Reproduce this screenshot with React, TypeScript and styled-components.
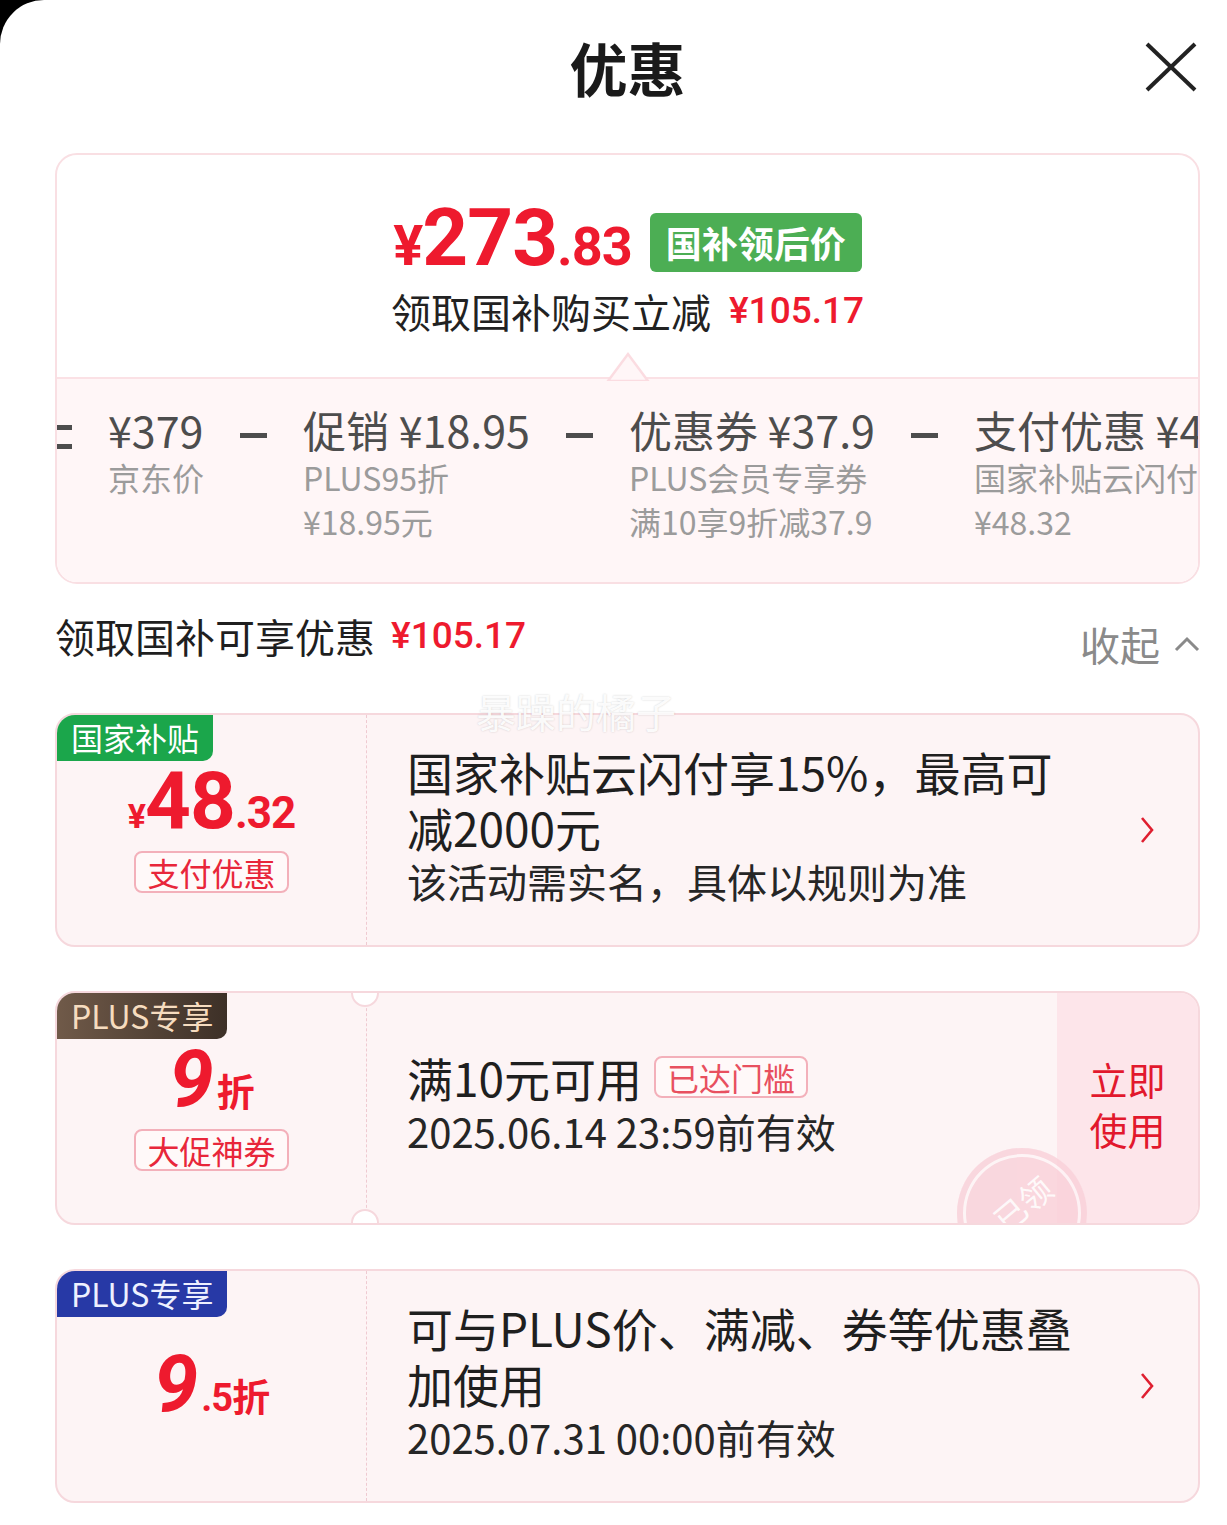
import React from "react";
import styled, { createGlobalStyle, css } from "styled-components";

const RED = "#ee1a2e";
const CJK = `"Noto Sans CJK SC", "Noto Sans", sans-serif`;
const NUM = `Roboto, "Noto Sans CJK SC", sans-serif`;

const GlobalStyle = createGlobalStyle`
  html, body { margin: 0; padding: 0; background: #000; }
  body { font-family: ${CJK}; }
  * { box-sizing: border-box; }
`;

const Sheet = styled.div`
  width: 1227px;
  min-height: 1525px;
  background: #fff;
  border-top-left-radius: 44px;
  padding: 0 27px 0 55px;
  overflow: hidden;
`;

const Header = styled.header`
  height: 140px;
  display: grid;
  grid-template-columns: 1fr auto 1fr;
  align-items: center;
`;

const Title = styled.h1`
  grid-column: 2;
  margin: -6px 0 0;
  font-size: 58px;
  font-weight: 700;
  line-height: 1;
  color: #1a1a1a;
`;

const CloseButton = styled.button`
  grid-column: 3;
  justify-self: end;
  margin: -6px 3px 0 0;
  padding: 0;
  border: 0;
  background: transparent;
  display: flex;
`;

/* ---------- summary card ---------- */

const SummaryCard = styled.section`
  margin-top: 13px;
  border: 2px solid #f9dfe3;
  border-radius: 22px;
  overflow: hidden;
`;

const PriceBlock = styled.div`
  padding: 47px 0 42px;
  display: flex;
  flex-direction: column;
  align-items: center;
  gap: 4px;
`;

const PriceRow = styled.div`
  display: flex;
  align-items: center;
  gap: 18px;
`;

const BigPrice = styled.div`
  display: flex;
  align-items: baseline;
  color: ${RED};
  font-family: ${NUM};
  font-weight: 700;
  line-height: 72px;
  letter-spacing: -1px;
`;

const PricePart = styled.span<{ $size: number }>`
  font-size: ${(p) => p.$size}px;
`;

const GreenTag = styled.span`
  height: 59px;
  line-height: 59px;
  padding: 0 16px;
  border-radius: 6px;
  background: #4cae54;
  color: #fff;
  font-size: 36px;
  font-weight: 700;
`;

const SubLine = styled.div`
  display: flex;
  align-items: center;
  gap: 18px;
  font-size: 40px;
  line-height: 48px;
  color: #222;
`;

const RedAmount = styled.span<{ $size?: number }>`
  color: ${RED};
  font-family: ${NUM};
  font-weight: 500;
  font-size: ${(p) => p.$size ?? 37}px;
`;

const Strip = styled.div`
  position: relative;
  background: #fff6f7;
  border-top: 2px solid #fbe1e5;
  padding: 24px 0 39px;
`;

const Notch = styled.svg`
  position: absolute;
  top: -28px;
  left: 50%;
  transform: translateX(-50%);
`;

const StripViewport = styled.div`
  overflow: hidden;
`;

const Track = styled.div`
  display: flex;
  align-items: flex-start;
  gap: 36px;
  margin-left: -12px;
  white-space: nowrap;
`;

const StripItem = styled.div`
  display: flex;
  flex-direction: column;
`;

const StripMain = styled.div`
  font-size: 43px;
  line-height: 52px;
  color: #4d4d4d;
`;

const StripSub = styled.div`
  font-size: 32px;
  line-height: 44px;
  color: #9b9b9b;
`;

const Minus = styled.span`
  flex: none;
  width: 27px;
  height: 5px;
  margin-top: 30px;
  background: #4d4d4d;
`;

const Equals = styled.span`
  flex: none;
  width: 27px;
  height: 24px;
  margin-top: 22px;
  border-top: 5px solid #4d4d4d;
  border-bottom: 5px solid #4d4d4d;
`;

/* ---------- section header ---------- */

const SectionRow = styled.div`
  margin-top: 30px;
  display: flex;
  justify-content: space-between;
  align-items: flex-start;
`;

const SectionTitle = styled.div`
  display: flex;
  align-items: center;
  gap: 16px;
  font-size: 40px;
  line-height: 44px;
  color: #1f1f1f;
`;

const Collapse = styled.div`
  margin-top: 8px;
  display: flex;
  align-items: center;
  gap: 14px;
  font-size: 40px;
  line-height: 44px;
  color: #8a8a8a;
`;

/* ---------- coupons ---------- */

const CouponList = styled.div`
  position: relative;
  margin-top: 47px;
  display: flex;
  flex-direction: column;
  gap: 44px;
`;

const Watermark = styled.div`
  position: absolute;
  top: -26px;
  left: 421px;
  z-index: 3;
  font-size: 40px;
  line-height: 48px;
  color: rgba(255, 255, 255, 0.92);
  text-shadow: 0 0 2px rgba(0, 0, 0, 0.18);
  pointer-events: none;
`;

const Card = styled.article`
  position: relative;
  height: 234px;
  display: grid;
  grid-template-columns: 310px 1fr auto;
  border: 2px solid #f6d8dd;
  border-radius: 20px;
  background: #fdf4f5;
  overflow: hidden;
`;

type Tone = "green" | "brown" | "blue";

const toneStyles: Record<Tone, ReturnType<typeof css>> = {
  green: css`
    background: #1ba64b;
    color: #fff;
  `,
  brown: css`
    background: linear-gradient(90deg, #705a49, #3d3027);
    color: #f6dcbf;
  `,
  blue: css`
    background: #2739a6;
    color: #eef0ff;
  `,
};

const CornerTag = styled.span<{ $tone: Tone }>`
  position: absolute;
  top: 0;
  left: 0;
  z-index: 2;
  height: 46px;
  line-height: 44px;
  padding: 0 14px;
  font-size: 32px;
  border-bottom-right-radius: 10px;
  ${(p) => toneStyles[p.$tone]}
`;

const LeftPane = styled.div<{ $notched?: boolean }>`
  position: relative;
  display: flex;
  flex-direction: column;
  align-items: center;
  justify-content: center;
  gap: 12px;
  padding-bottom: 4px;
  border-right: 1.5px dashed #efcad1;
  ${(p) =>
    p.$notched &&
    css`
      &::before,
      &::after {
        content: "";
        position: absolute;
        right: -13px;
        width: 24px;
        height: 24px;
        border-radius: 50%;
        background: #fff;
        border: 2px solid #f6d8dd;
      }
      &::before {
        top: -14px;
      }
      &::after {
        bottom: -14px;
      }
    `}
`;

const Amount = styled.div`
  display: flex;
  align-items: baseline;
  height: 76px;
  line-height: 76px;
  color: ${RED};
  font-family: ${NUM};
  font-weight: 700;
`;

const AmountPart = styled.span<{ $size: number; $italic?: boolean; $cjk?: boolean }>`
  font-size: ${(p) => p.$size}px;
  font-style: ${(p) => (p.$italic ? "italic" : "normal")};
  font-family: ${(p) => (p.$cjk ? CJK : NUM)};
  font-weight: 700;
  letter-spacing: -1px;
  margin-right: ${(p) => (p.$italic ? 4 : 0)}px;
`;

const OutlinePill = styled.span<{ $muted?: boolean }>`
  display: inline-block;
  height: 42px;
  line-height: 38px;
  padding: 0 11px;
  border: 2px solid #f3b0ba;
  border-radius: 8px;
  background: #fff9f9;
  color: ${(p) => (p.$muted ? "#e8505f" : "#e8263a")};
  font-size: 32px;
  white-space: nowrap;
`;

const RightPane = styled.div`
  display: flex;
  flex-direction: column;
  justify-content: center;
  padding: 0 60px 10px 40px;
  min-width: 0;
`;

const CouponTitle = styled.div`
  display: flex;
  align-items: center;
  gap: 12px;
  font-size: 46px;
  line-height: 56px;
  color: #1f1f1f;
`;

const CouponSub = styled.div`
  font-size: 40px;
  line-height: 52px;
  color: #262626;
`;

const ChevronCell = styled.div`
  display: flex;
  align-items: center;
  padding-right: 43px;
`;

const ActionPanel = styled.div`
  position: relative;
  width: 141px;
  display: flex;
  align-items: center;
  justify-content: center;
  padding-bottom: 8px;
  background: #fde5ea;
  color: #e2182d;
  font-size: 38px;
  line-height: 50px;
  text-align: center;
`;

const Stamp = styled.div`
  position: absolute;
  left: 900px;
  top: 155px;
  width: 130px;
  height: 130px;
  border-radius: 50%;
  background: #f9d2da;
  box-shadow: inset 0 0 0 6px #f9d2da, inset 0 0 0 9px rgba(255, 255, 255, 0.75);
  display: flex;
  align-items: center;
  justify-content: center;
  opacity: 0.85;
  z-index: 1;
`;

const StampText = styled.span`
  transform: translateY(-10px) rotate(-40deg);
  font-size: 32px;
  color: rgba(255, 255, 255, 0.9);
`;

const Chevron = () => (
  <svg width="16" height="28" viewBox="0 0 16 28">
    <polyline points="3,2 13,14 3,26" fill="none" stroke="#df1f30" strokeWidth="2.6" />
  </svg>
);

export default function App() {
  return (
    <>
      <GlobalStyle />
      <Sheet>
        <Header>
          <Title>优惠</Title>
          <CloseButton aria-label="关闭">
            <svg width="52" height="50" viewBox="0 0 52 50">
              <line x1="2" y1="2" x2="50" y2="48" stroke="#222" strokeWidth="4" />
              <line x1="50" y1="2" x2="2" y2="48" stroke="#222" strokeWidth="4" />
            </svg>
          </CloseButton>
        </Header>

        <SummaryCard>
          <PriceBlock>
            <PriceRow>
              <BigPrice>
                <PricePart $size={56}>¥</PricePart>
                <PricePart $size={80}>273</PricePart>
                <PricePart $size={54}>.83</PricePart>
              </BigPrice>
              <GreenTag>国补领后价</GreenTag>
            </PriceRow>
            <SubLine>
              领取国补购买立减
              <RedAmount>¥105.17</RedAmount>
            </SubLine>
          </PriceBlock>
          <Strip>
            <Notch width="46" height="30" viewBox="0 0 46 30">
              <polygon points="3,30 23,3 43,30" fill="#fff6f7" stroke="#fbdce1" strokeWidth="2.5" />
            </Notch>
            <StripViewport>
              <Track>
                <Equals />
                <StripItem>
                  <StripMain>¥379</StripMain>
                  <StripSub>京东价</StripSub>
                </StripItem>
                <Minus />
                <StripItem>
                  <StripMain>促销 ¥18.95</StripMain>
                  <StripSub>PLUS95折</StripSub>
                  <StripSub>¥18.95元</StripSub>
                </StripItem>
                <Minus />
                <StripItem>
                  <StripMain>优惠券 ¥37.9</StripMain>
                  <StripSub>PLUS会员专享券</StripSub>
                  <StripSub>满10享9折减37.9</StripSub>
                </StripItem>
                <Minus />
                <StripItem>
                  <StripMain>支付优惠 ¥48.32</StripMain>
                  <StripSub>国家补贴云闪付享15%</StripSub>
                  <StripSub>¥48.32</StripSub>
                </StripItem>
              </Track>
            </StripViewport>
          </Strip>
        </SummaryCard>

        <SectionRow>
          <SectionTitle>
            领取国补可享优惠
            <RedAmount>¥105.17</RedAmount>
          </SectionTitle>
          <Collapse>
            收起
            <svg width="26" height="16" viewBox="0 0 26 16">
              <polyline points="2,14 13,3 24,14" fill="none" stroke="#8a8a8a" strokeWidth="3" />
            </svg>
          </Collapse>
        </SectionRow>

        <CouponList>
          <Watermark>暴躁的橘子</Watermark>

          <Card>
            <CornerTag $tone="green">国家补贴</CornerTag>
            <LeftPane>
              <Amount>
                <AmountPart $size={34}>¥</AmountPart>
                <AmountPart $size={80}>48</AmountPart>
                <AmountPart $size={44}>.32</AmountPart>
              </Amount>
              <OutlinePill>支付优惠</OutlinePill>
            </LeftPane>
            <RightPane>
              <CouponTitle>国家补贴云闪付享15%，最高可减2000元</CouponTitle>
              <CouponSub>该活动需实名，具体以规则为准</CouponSub>
            </RightPane>
            <ChevronCell>
              <Chevron />
            </ChevronCell>
          </Card>

          <Card>
            <CornerTag $tone="brown">PLUS专享</CornerTag>
            <LeftPane $notched>
              <Amount>
                <AmountPart $size={80} $italic>
                  9
                </AmountPart>
                <AmountPart $size={38} $cjk>
                  折
                </AmountPart>
              </Amount>
              <OutlinePill>大促神券</OutlinePill>
            </LeftPane>
            <RightPane>
              <CouponTitle>
                满10元可用
                <OutlinePill $muted>已达门槛</OutlinePill>
              </CouponTitle>
              <CouponSub>2025.06.14 23:59前有效</CouponSub>
            </RightPane>
            <ActionPanel>
              立即
              <br />
              使用
            </ActionPanel>
            <Stamp>
              <StampText>已领</StampText>
            </Stamp>
          </Card>

          <Card>
            <CornerTag $tone="blue">PLUS专享</CornerTag>
            <LeftPane>
              <Amount>
                <AmountPart $size={80} $italic>
                  9
                </AmountPart>
                <AmountPart $size={38}>.5</AmountPart>
                <AmountPart $size={38} $cjk>
                  折
                </AmountPart>
              </Amount>
            </LeftPane>
            <RightPane>
              <CouponTitle>可与PLUS价、满减、券等优惠叠加使用</CouponTitle>
              <CouponSub>2025.07.31 00:00前有效</CouponSub>
            </RightPane>
            <ChevronCell>
              <Chevron />
            </ChevronCell>
          </Card>
        </CouponList>
      </Sheet>
    </>
  );
}
